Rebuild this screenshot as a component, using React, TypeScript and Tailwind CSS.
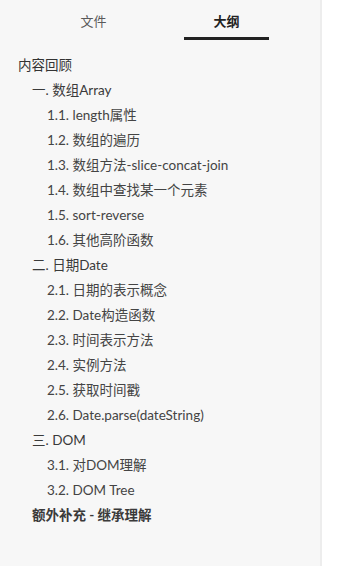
import React from "react";

type Item = { text: string; level: 0 | 1 | 2; bold?: boolean };

const items: Item[] = [
  { text: "内容回顾", level: 0 },
  { text: "一. 数组Array", level: 1 },
  { text: "1.1. length属性", level: 2 },
  { text: "1.2. 数组的遍历", level: 2 },
  { text: "1.3. 数组方法-slice-concat-join", level: 2 },
  { text: "1.4. 数组中查找某一个元素", level: 2 },
  { text: "1.5. sort-reverse", level: 2 },
  { text: "1.6. 其他高阶函数", level: 2 },
  { text: "二. 日期Date", level: 1 },
  { text: "2.1. 日期的表示概念", level: 2 },
  { text: "2.2. Date构造函数", level: 2 },
  { text: "2.3. 时间表示方法", level: 2 },
  { text: "2.4. 实例方法", level: 2 },
  { text: "2.5. 获取时间戳", level: 2 },
  { text: "2.6. Date.parse(dateString)", level: 2 },
  { text: "三. DOM", level: 1 },
  { text: "3.1. 对DOM理解", level: 2 },
  { text: "3.2. DOM Tree", level: 2 },
  { text: "额外补充 - 继承理解", level: 1, bold: true },
];

export default function App() {
  return (
    <div
      className="flex h-[566px] w-[348px] bg-white"
      style={{ fontFamily: 'Lato, "Noto Sans CJK SC", sans-serif' }}
    >
      <div className="flex h-full w-[322px] flex-col border-r-2 border-[#ededed] bg-[#f7f7f7]">
        <div className="grid grid-cols-2 px-[27px] pt-[10px]">
          <div className="flex flex-col items-center">
            <span className="text-[13px] leading-[22px] text-[#5a5a5a]">文件</span>
          </div>
          <div className="flex flex-col items-center">
            <span className="text-[13px] font-bold leading-[22px] text-[#222]">大纲</span>
            <div className="mt-[5px] h-[3px] w-[85px] bg-[#222]" />
          </div>
        </div>
        <div className="mt-[13px] flex flex-col">
          {items.map((it, i) => (
            <div
              key={i}
              className={
                "h-[25px] whitespace-nowrap text-[13.5px] leading-[25px] " +
                (it.level === 0
                  ? "pl-[18px] text-[#333]"
                  : it.level === 1
                  ? "pl-[32px] text-[#3a3a3a]"
                  : "pl-[47px] text-[#444]") +
                (it.bold ? " font-bold text-[#2a2a2a]" : "")
              }
            >
              {it.text}
            </div>
          ))}
        </div>
      </div>
    </div>
  );
}
